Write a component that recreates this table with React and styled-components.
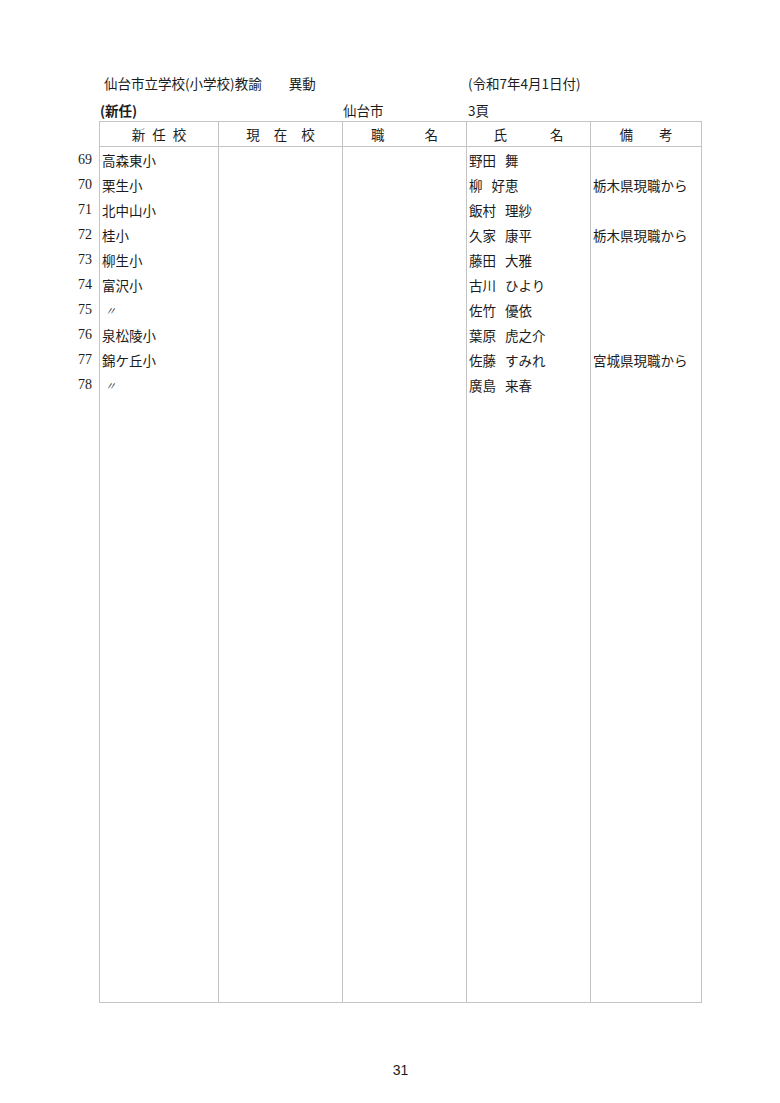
import React from "react"
import styled, { createGlobalStyle } from "styled-components"

const GlobalStyle = createGlobalStyle`
  html, body {
    margin: 0;
    padding: 0;
    background: #fff;
  }
  body {
    font-family: "Noto Sans CJK JP", "Noto Sans", sans-serif;
    color: #1c1c1c;
  }
`

const COLUMNS = "24px 119px 124px 124px 124px 112px"
const LINE = "#c4c4c4"

const Page = styled.div`
  width: 780px;
  height: 1103px;
  box-sizing: border-box;
  padding: 73px 0 0 75px;
  display: flex;
  flex-direction: column;
`

const Heading = styled.div`
  display: grid;
  grid-template-columns: ${COLUMNS};
  grid-auto-rows: 20px;
  row-gap: 7px;
  margin-bottom: 1px;
  font-size: 13.5px;
  line-height: 20px;
`

const HeadText = styled.div`
  grid-column: ${p => p.$col};
  padding-left: ${p => p.$pad || 0}px;
  font-weight: ${p => (p.$bold ? 700 : 400)};
  white-space: nowrap;
  word-spacing: ${p => p.$space || 0}px;
`

const Table = styled.div`
  width: 627px;
  height: 882px;
  display: flex;
  flex-direction: column;
  font-size: 13.5px;
`

const Row = styled.div`
  display: grid;
  grid-template-columns: ${COLUMNS};
  height: ${p => (p.$fill ? "auto" : "25px")};
  flex: ${p => (p.$fill ? 1 : "none")};
`

const HeaderRow = styled(Row)`
  height: 26px;
`

const Num = styled.div`
  font-family: "Liberation Serif", serif;
  font-size: 14px;
  text-align: right;
  padding-right: 7px;
  line-height: 25px;
`

const Cell = styled.div`
  border-left: 1px solid ${LINE};
  border-bottom: ${p => (p.$bottom ? `1px solid ${LINE}` : "none")};
  padding-left: 2px;
  display: flex;
  align-items: center;
  white-space: nowrap;
  word-spacing: 6px;

  &:last-child {
    border-right: 1px solid ${LINE};
  }
`

const HeadCell = styled(Cell)`
  border-top: 1px solid ${LINE};
  border-bottom: 1px solid ${LINE};
  justify-content: center;
  gap: ${p => p.$gap}px;
  padding: 0;
`

const Ditto = styled.span`
  font-size: 11px;
  font-style: italic;
  padding-left: 3px;
`

const Footer = styled.div`
  width: 627px;
  padding-left: 24px;
  box-sizing: border-box;
  margin-top: 57px;
  text-align: center;
  font-family: "Liberation Sans Narrow", "Liberation Sans", sans-serif;
  font-size: 14px;
  line-height: 20px;
`

const headers = [
  { label: "新任校", gap: 7 },
  { label: "現在校", gap: 14 },
  { label: "職名", gap: 40 },
  { label: "氏名", gap: 43 },
  { label: "備考", gap: 26 },
]

const rows = [
  { no: 69, school: "高森東小", name: "野田 舞" },
  { no: 70, school: "栗生小", name: "柳 好恵", note: "栃木県現職から" },
  { no: 71, school: "北中山小", name: "飯村 理紗" },
  { no: 72, school: "桂小", name: "久家 康平", note: "栃木県現職から" },
  { no: 73, school: "柳生小", name: "藤田 大雅" },
  { no: 74, school: "富沢小", name: "古川 ひより" },
  { no: 75, school: "〃", name: "佐竹 優依" },
  { no: 76, school: "泉松陵小", name: "葉原 虎之介" },
  { no: 77, school: "錦ケ丘小", name: "佐藤 すみれ", note: "宮城県現職から" },
  { no: 78, school: "〃", name: "廣島 来春" },
]

const App = () => {
  return (
    <Page>
      <GlobalStyle />
      <Heading>
        <HeadText $col="2 / 5" $pad={5}>
          仙台市立学校(小学校)教諭　　異動
        </HeadText>
        <HeadText $col="5 / 7" $pad={2}>
          (令和7年4月1日付)
        </HeadText>
        <HeadText $col="2 / 3" $pad={1} $bold>
          (新任)
        </HeadText>
        <HeadText $col="4 / 5" $pad={1}>
          仙台市
        </HeadText>
        <HeadText $col="5 / 6" $pad={2}>
          3頁
        </HeadText>
      </Heading>

      <Table>
        <HeaderRow>
          <div />
          {headers.map(h => (
            <HeadCell key={h.label} $gap={h.gap}>
              {h.label.split("").map((ch, i) => (
                <span key={i}>{ch}</span>
              ))}
            </HeadCell>
          ))}
        </HeaderRow>

        {rows.map(r => (
          <Row key={r.no}>
            <Num>{r.no}</Num>
            <Cell>{r.school === "〃" ? <Ditto>〃</Ditto> : r.school}</Cell>
            <Cell />
            <Cell />
            <Cell>{r.name}</Cell>
            <Cell>{r.note}</Cell>
          </Row>
        ))}

        <Row $fill>
          <div />
          <Cell $bottom />
          <Cell $bottom />
          <Cell $bottom />
          <Cell $bottom />
          <Cell $bottom />
        </Row>
      </Table>

      <Footer>31</Footer>
    </Page>
  )
}

export default App
